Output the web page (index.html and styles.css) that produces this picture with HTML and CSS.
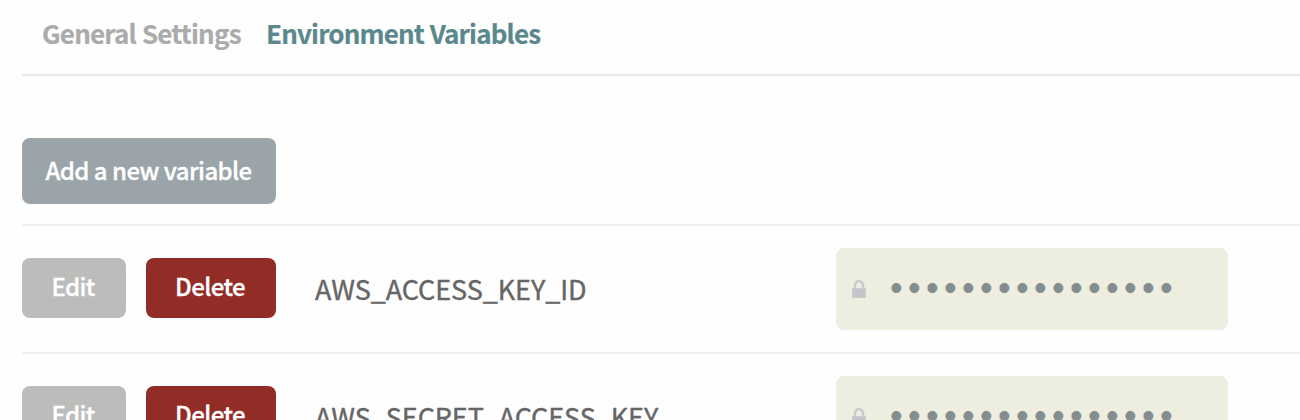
FILE: index.html
```html
<!DOCTYPE html>
<html lang="en">
<head>
<meta charset="utf-8">
<title>Environment Variables</title>
<link rel="stylesheet" href="styles.css">
</head>
<body>
<svg class="sprite" aria-hidden="true">
  <symbol id="lock" viewBox="0 0 14 18">
    <path class="shackle" d="M3 8V5.2a4 4 0 0 1 8 0V8"/>
    <path class="lock-edge" d="M0 8h14v10H0z"/>
    <path class="lock-body" d="M1 9h12v8H1z"/>
  </symbol>
</svg>
<main class="page">
  <nav class="tabs">
    <a class="tab tab-general">General Settings</a>
    <a class="tab tab-active">Environment Variables</a>
  </nav>
  <div class="toolbar">
    <button class="btn btn-add">Add a new variable</button>
  </div>
  <div class="row">
    <button class="btn btn-edit">Edit</button>
    <button class="btn btn-delete">Delete</button>
    <span class="name">AWS_ACCESS_KEY_ID</span>
    <div class="secret"><svg class="lock"><use href="#lock"/></svg><span class="dots">••••••••••••••••</span></div>
  </div>
  <div class="row">
    <button class="btn btn-edit">Edit</button>
    <button class="btn btn-delete">Delete</button>
    <span class="name">AWS_SECRET_ACCESS_KEY</span>
    <div class="secret"><svg class="lock"><use href="#lock"/></svg><span class="dots">••••••••••••••••</span></div>
  </div>
</main>
</body>
</html>
```
FILE: styles.css
```css
* { box-sizing: border-box; }
html, body { margin: 0; height: 420px; overflow: hidden; background: #fefefe; }
body { font-family: "Noto Sans CJK SC", "Noto Sans", sans-serif; }
.sprite { display: none; }
.page { height: 420px; overflow: hidden; padding-left: 22px; }
.tabs { display: flex; gap: 25px; height: 76px; padding-left: 20px; border-bottom: 2px solid #e9e9e9; }
.tab { font-size: 26px; font-weight: 700; line-height: 38px; padding-top: 14px; letter-spacing: -0.8px; word-spacing: 0.8px; color: #ababab; -webkit-text-stroke: 0.2px; white-space: nowrap; }
.tab-general { width: 199px; }
.tab-active { letter-spacing: -0.85px; color: #5a888d; }
.toolbar { height: 150px; padding-top: 62px; border-bottom: 2px solid #f0f0f0; }
.btn { display: block; flex: none; margin: 0; padding: 0 2px 3px 0; border: 0; border-radius: 8px; color: #fff; font-family: inherit; font-size: 24px; font-weight: 500; line-height: 36px; letter-spacing: -0.62px; word-spacing: 0.3px; -webkit-text-stroke: 0.3px; white-space: nowrap; }
.btn-add { width: 254px; height: 66px; padding-right: 1px; background: #9aa4a9; }
.btn-edit { width: 104px; height: 60px; margin-bottom: 2px; padding-bottom: 4px; background: #bcbcba; }
.btn-delete { width: 130px; height: 60px; margin-bottom: 2px; margin-left: 20px; padding-bottom: 4px; background: #912c27; }
.row { display: flex; align-items: center; height: 128px; border-bottom: 2px solid #f0f0f0; }
.name { width: 521px; margin-left: 39px; font-size: 27px; line-height: 40px; letter-spacing: -0.08px; color: #666; -webkit-text-stroke: 0.4px #666; white-space: nowrap; }
.secret { display: flex; align-items: center; flex: none; width: 392px; height: 82px; padding-left: 16px; border-radius: 8px; background: #edeedf; }
.lock { width: 14px; height: 18px; }
.shackle { fill: none; stroke: #cacbcc; stroke-width: 2.6; }
.lock-edge { fill: #cacbcc; }
.lock-body { fill: #c4c5c8; }
.dots { margin-left: 24px; padding-bottom: 2px; font-family: "Liberation Sans", sans-serif; font-size: 36px; line-height: 40px; letter-spacing: 5.4px; color: #848d8f; }
```
